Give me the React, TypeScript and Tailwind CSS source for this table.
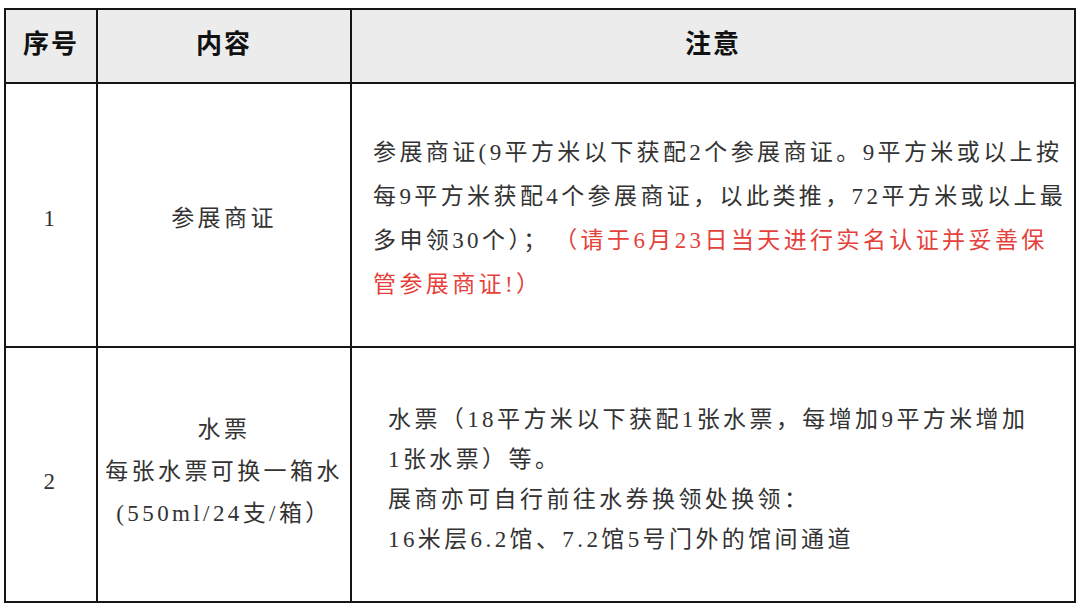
import React from 'react';

const bodyFont = { fontFamily: '"Liberation Serif", "Noto Sans CJK SC", serif' } as React.CSSProperties;

const Line: React.FC<{ children: React.ReactNode }> = ({ children }) => (
  <div className="whitespace-nowrap">{children}</div>
);

export default function App() {
  return (
    <div className="w-[1080px] h-[611px] bg-white pt-[8px] pl-[4px]">
      <table
        className="border-collapse table-fixed w-[1070px] text-[#333] font-['Liberation_Serif','Noto_Sans_CJK_SC',serif]"
      >
        <colgroup>
          <col className="w-[92px]" />
          <col className="w-[254px]" />
          <col className="w-[724px]" />
        </colgroup>
        <thead>
          <tr className="h-[74px] bg-[#ececec] text-[#111] text-[26px] font-bold font-['Noto_Sans_CJK_SC',sans-serif] tracking-[2px]">
            <th className="border-2 border-[#151515] text-center align-middle pb-[10px]">序号</th>
            <th className="border-2 border-[#151515] text-center align-middle pb-[10px]">内容</th>
            <th className="border-2 border-[#151515] text-center align-middle pb-[10px]">注意</th>
          </tr>
        </thead>
        <tbody className="text-[23px] tracking-[3.4px] leading-[44px]">
          <tr className="h-[264px]">
            <td className="border-2 border-[#151515] text-center align-middle pt-[8px]" style={bodyFont}>1</td>
            <td className="border-2 border-[#151515] text-center align-middle pt-[8px]" style={bodyFont}>参展商证</td>
            <td className="border-2 border-[#151515] align-middle pl-[21px] pt-[8px]" style={bodyFont}>
              <Line>参展商证(9平方米以下获配2个参展商证。9平方米或以上按</Line>
              <Line>每9平方米获配4个参展商证，以此类推，72平方米或以上最</Line>
              <Line>
                多申领30个）；<span className="ml-[16px] text-[#e5413a]">（请于6月23日当天进行实名认证并妥善保</span>
              </Line>
              <Line>
                <span className="text-[#e5413a]">管参展商证!）</span>
              </Line>
            </td>
          </tr>
          <tr className="h-[255px]">
            <td className="border-2 border-[#151515] text-center align-middle pt-[14px]" style={bodyFont}>2</td>
            <td className="border-2 border-[#151515] text-center align-middle leading-[42px] pb-[6px]" style={bodyFont}>
              <Line>水票</Line>
              <Line>每张水票可换一箱水</Line>
              <Line>(550ml/24支/箱）</Line>
            </td>
            <td className="border-2 border-[#151515] align-middle pl-[36px] pt-[10px] leading-[40px]" style={bodyFont}>
              <Line>水票（18平方米以下获配1张水票，每增加9平方米增加</Line>
              <Line>1张水票）等。</Line>
              <Line>展商亦可自行前往水券换领处换领：</Line>
              <Line>16米层6.2馆、7.2馆5号门外的馆间通道</Line>
            </td>
          </tr>
        </tbody>
      </table>
    </div>
  );
}
